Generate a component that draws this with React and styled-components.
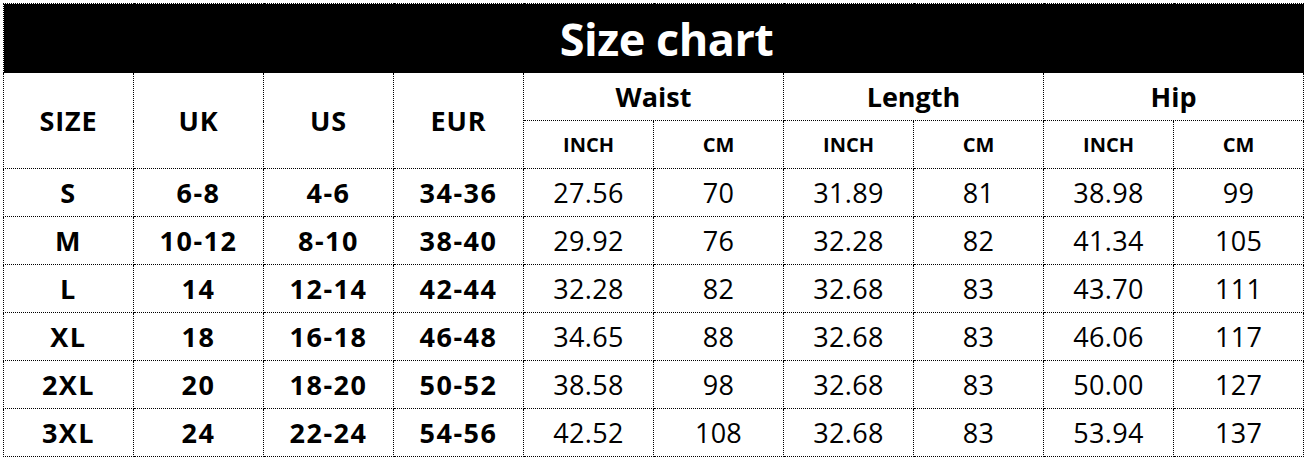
import React from 'react';
import styled, { createGlobalStyle } from 'styled-components';

const GlobalStyle = createGlobalStyle`
  html, body {
    margin: 0;
    padding: 0;
    background: #fff;
  }
  body {
    font-family: "Open Sans", "Noto Sans", sans-serif;
    color: #000;
  }
`;

const Page = styled.div`
  padding: 3px 3px 0 3px;
`;

const Table = styled.table`
  border-collapse: collapse;
  table-layout: fixed;
  width: 1301px;
`;

const Col = styled.col`
  width: 130px;
`;

const TitleCell = styled.th`
  height: 68px;
  padding: 0 0 0 26px;
  background: #000;
  color: #fff;
  font-size: 45px;
  font-weight: 700;
  border: 1px dotted #000;
  letter-spacing: -0.5px;
`;

const Row = styled.tr`
  height: 48px;
`;

const sizes = { small: '20px', head: '27px', group: '27px', data: '27px' };

const Cell = styled.td`
  padding: 0;
  border: 1px dotted #000;
  text-align: center;
  vertical-align: middle;
  font-size: ${(p) => sizes[p.$size || 'data']};
  font-weight: ${(p) => (p.$bold ? 700 : 400)};
  letter-spacing: ${(p) => p.$spacing || 'normal'};
  line-height: 1;
`;

const groups = ['Waist', 'Length', 'Hip'];

const rows = [
  ['S', '6-8', '4-6', '34-36', '27.56', '70', '31.89', '81', '38.98', '99'],
  ['M', '10-12', '8-10', '38-40', '29.92', '76', '32.28', '82', '41.34', '105'],
  ['L', '14', '12-14', '42-44', '32.28', '82', '32.68', '83', '43.70', '111'],
  ['XL', '18', '16-18', '46-48', '34.65', '88', '32.68', '83', '46.06', '117'],
  ['2XL', '20', '18-20', '50-52', '38.58', '98', '32.68', '83', '50.00', '127'],
  ['3XL', '24', '22-24', '54-56', '42.52', '108', '32.68', '83', '53.94', '137'],
];

const App = () => (
  <Page>
    <GlobalStyle />
    <Table>
      <colgroup>
        {Array.from({ length: 10 }).map((_, i) => (
          <Col key={i} />
        ))}
      </colgroup>
      <thead>
        <tr>
          <TitleCell colSpan={10}>Size chart</TitleCell>
        </tr>
        <Row>
          {['SIZE', 'UK', 'US', 'EUR'].map((h) => (
            <Cell as="th" key={h} rowSpan={2} $bold $size="head" $spacing="0.8px">
              {h}
            </Cell>
          ))}
          {groups.map((g) => (
            <Cell as="th" key={g} colSpan={2} $bold $size="group">
              {g}
            </Cell>
          ))}
        </Row>
        <Row>
          {groups.map((g) => (
            <React.Fragment key={g}>
              <Cell as="th" $bold $size="small">INCH</Cell>
              <Cell as="th" $bold $size="small">CM</Cell>
            </React.Fragment>
          ))}
        </Row>
      </thead>
      <tbody>
        {rows.map((r) => (
          <Row key={r[0]}>
            {r.map((v, i) => (
              <Cell key={i} $bold={i < 4} $spacing={i < 4 ? '1.5px' : '0.3px'}>
                {v}
              </Cell>
            ))}
          </Row>
        ))}
      </tbody>
    </Table>
  </Page>
);

export default App;
